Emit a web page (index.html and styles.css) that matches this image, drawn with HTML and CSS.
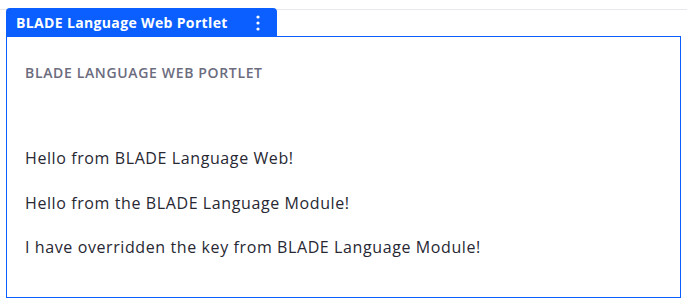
FILE: index.html
```html
<!DOCTYPE html>
<html lang="en">
<head>
<meta charset="utf-8">
<title>BLADE Language Web Portlet</title>
<link rel="stylesheet" href="styles.css">
</head>
<body>
<div class="topbar"></div>
<section class="portlet">
  <header class="portlet-topper">
    <span class="portlet-name">BLADE Language Web Portlet</span>
    <span class="kebab" aria-label="Options">
      <svg width="4" height="16" viewBox="0 0 4 16"><circle cx="2" cy="2" r="1.6" fill="#fff"/><circle cx="2" cy="8" r="1.6" fill="#fff"/><circle cx="2" cy="14" r="1.6" fill="#fff"/></svg>
    </span>
  </header>
  <div class="portlet-content">
    <h2 class="portlet-title">BLADE LANGUAGE WEB PORTLET</h2>
    <div class="messages">
      <p>Hello from BLADE Language Web!</p>
      <p>Hello from the BLADE Language Module!</p>
      <p>I have overridden the key from BLADE Language Module!</p>
    </div>
  </div>
</section>
</body>
</html>
```
FILE: styles.css
```css
html, body {
  margin: 0;
  padding: 0;
  background: #fff;
}
body {
  font-family: "Open Sans", "Noto Sans", sans-serif;
  color: #272833;
}
.topbar {
  height: 9px;
  border-bottom: 1px solid #e7e7ed;
}
.portlet {
  margin: -2px 6px 0 6px;
}
.portlet-topper {
  display: flex;
  align-items: center;
  justify-content: space-between;
  width: 271px;
  height: 28px;
  box-sizing: border-box;
  padding: 1px 17px 0 10px;
  background: #0b5fff;
  border-radius: 4px 4px 0 0;
  color: #fff;
}
.portlet-name {
  font-size: 14px;
  font-weight: 700;
  letter-spacing: 0.35px;
}
.kebab {
  display: flex;
  align-items: center;
}
.portlet-content {
  border: 1px solid #0b5fff;
  height: 262px;
  box-sizing: border-box;
  padding: 24px 18px 0 18px;
}
.portlet-title {
  margin: 0;
  font-size: 14px;
  font-weight: 600;
  color: #6b6c7e;
  line-height: 24px;
  letter-spacing: 0.65px;
}
.messages {
  padding-top: 61px;
}
.messages p {
  margin: 0 0 20.5px 0;
  font-size: 16px;
  line-height: 24px;
  letter-spacing: 0.6px;
}
```
